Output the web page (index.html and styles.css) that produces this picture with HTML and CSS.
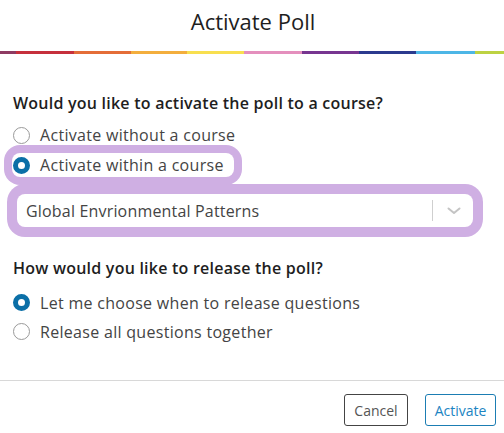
FILE: index.html
```html
<!DOCTYPE html>
<html>
<head>
<meta charset="utf-8">
<link rel="stylesheet" href="styles.css">
</head>
<body>
<div class="modal">
  <header class="header"><h1 class="title">Activate Poll</h1></header>
  <div class="colorbar"></div>
  <main class="content">
    <p class="question q1">Would you like to activate the poll to a course?</p>
    <div class="options">
      <label class="option"><span class="radio"></span><span class="opt-text">Activate without a course</span></label>
      <label class="option option-hl"><span class="radio checked"></span><span class="opt-text">Activate within a course</span></label>
    </div>
    <div class="select">
      <span class="select-text">Global Envrionmental Patterns</span>
      <span class="select-divider"></span>
      <svg class="chevron" width="14" height="8" viewBox="0 0 14 8"><path d="M1.5 1.5 L7 6 L12.5 1.5" fill="none" stroke="#c4c4c4" stroke-width="2" stroke-linecap="round" stroke-linejoin="round"/></svg>
    </div>
    <p class="question q2">How would you like to release the poll?</p>
    <div class="options options2">
      <label class="option"><span class="radio checked"></span><span class="opt-text">Let me choose when to release questions</span></label>
      <label class="option"><span class="radio"></span><span class="opt-text">Release all questions together</span></label>
    </div>
  </main>
  <footer class="footer">
    <button class="btn btn-cancel">Cancel</button>
    <button class="btn btn-activate">Activate</button>
  </footer>
</div>
</body>
</html>
```
FILE: styles.css
```css
* { box-sizing: border-box; }
html, body { margin: 0; padding: 0; background: #fff; }
body { font-family: "Open Sans", sans-serif; color: #444; }
.modal { width: 504px; height: 433px; display: flex; flex-direction: column; }
.header { height: 51px; display: flex; align-items: center; justify-content: center; }
.title { margin: 0; font-size: 22px; font-weight: 400; color: #1e1e1e; padding-bottom: 10px; padding-left: 2px; }
.colorbar {
  height: 3px;
  background: linear-gradient(to right,
    #8e3b62 0, #8e3b62 16px,
    #c6303c 16px, #c6303c 74px,
    #e46d38 74px, #e46d38 131px,
    #f3ae3d 131px, #f3ae3d 187px,
    #f8df4f 187px, #f8df4f 244px,
    #e48fbd 244px, #e48fbd 302px,
    #773590 302px, #773590 359px,
    #2b3a8e 359px, #2b3a8e 416px,
    #4db6e6 416px, #4db6e6 475px,
    #bdd242 475px, #bdd242 504px);
}
.content { padding: 39px 0 0 13px; }
.question { margin: 0; font-size: 16px; line-height: 20px; font-weight: 600; color: #1e1e1e; letter-spacing: 0.23px; }
.options { display: flex; flex-direction: column; margin-top: 7px; }
.options2 { margin-top: 10px; }
.option { display: flex; align-items: center; height: 30px; font-size: 16px; color: #444; }
.options2 .option { height: 29px; }
.opt-text { margin-left: 10px; letter-spacing: 0.3px; }
.radio { width: 17px; height: 17px; border-radius: 50%; border: 1.5px solid #9a9a9a; background: #fff; flex: none; }
.radio.checked { border: 5.5px solid #0b6fa7; }
.option-hl {
  height: 24px; margin: 3px 0; width: 222px; margin-left: -1px; padding-left: 1px;
  background: #fff; border-radius: 8px;
  box-shadow: 0 0 0 8px #cfafe3;
}
.select {
  margin-top: 14px; margin-left: 4px; width: 456px; height: 33px;
  background: #fff; border-radius: 8px;
  box-shadow: 0 0 0 10px #cfafe3;
  display: flex; align-items: center; padding-left: 9px;
}
.select-text { font-size: 16px; color: #444; flex: 1; letter-spacing: 0.18px; }
.select-divider { width: 1px; height: 21px; background: #cfcfcf; }
.chevron { margin: 1px 12px 0 14px; }
.q2 { margin-top: 31px; }
.footer {
  margin-top: auto; height: 53px; border-top: 1px solid #d8d8d8;
  display: flex; justify-content: flex-end; align-items: flex-start;
  padding: 13px 8px 0 0; gap: 17px;
}
.btn { height: 32px; border-radius: 3px; background: #fff; font-family: "Open Sans", sans-serif; font-size: 14px; padding: 0; }
.btn-cancel { width: 64px; border: 1px solid #444; color: #555; }
.btn-activate { width: 71px; border: 1px solid #1b7db3; color: #1b84c2; }
```
